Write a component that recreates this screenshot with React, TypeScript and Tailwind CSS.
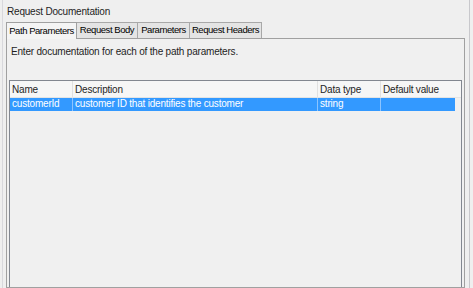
import * as React from 'react';

const tabs = [
  { label: 'Path Parameters', width: 'w-[71px]' },
  { label: 'Request Body', width: 'w-[61px]' },
  { label: 'Parameters', width: 'w-[52px]' },
  { label: 'Request Headers', width: 'w-[72px]' },
];

const columns = [
  { label: 'Name', width: 'w-[63px]' },
  { label: 'Description', width: 'w-[245px]' },
  { label: 'Data type', width: 'w-[63px]' },
  { label: 'Default value', width: 'flex-1' },
];

const row = ['customerId', 'customer ID that identifies the customer', 'string', ''];

export default function App() {
  return (
    <div
      className="w-[473px] h-[288px] bg-[#efefef] text-[10px] tracking-[-0.2px] text-[#1e1e1e] overflow-hidden flex"
      style={{ fontFamily: '"Liberation Sans", Arial, sans-serif' }}
    >
      <div className="w-[3px] border-r border-[#d8d8dc] h-full" />
      <div className="flex-1 flex flex-col pl-[3px] pr-[4px]">
        <div className="h-[21px] pt-[6px] pl-[1px] leading-[12px]">Request Documentation</div>

        {/* Tabs */}
        <div className="flex items-end h-[17px]">
          {tabs.map((t, i) => {
            const active = i === 0;
            return (
              <div
                key={t.label}
                className={
                  active
                    ? `${t.width} h-[17px] border border-b-0 border-[#a0a0a0] bg-[#f4f4f4] leading-[15px] text-center text-[9.5px] tracking-[-0.45px] text-black relative z-10 -mb-px whitespace-nowrap`
                    : `${t.width} h-[16px] border border-l-0 border-b-0 border-[#a8a8a8] bg-[#e4e4e4] leading-[14px] text-center text-[9.5px] tracking-[-0.45px] text-black whitespace-nowrap`
                }
              >
                {t.label}
              </div>
            );
          })}
        </div>

        {/* Panel */}
        <div className="flex-1 border border-[#a0a0a0] bg-[#f0f0f0] flex flex-col px-[2px]">
          <div className="pt-[7px] pl-[2px] leading-[12px] h-[41px]">
            Enter documentation for each of the path parameters.
          </div>
          <div className="flex-1 border border-[#828790] border-b-0 bg-[#f0f0f0] flex flex-col">
            <div className="flex h-[17px] border-b border-[#e4e4e4] bg-[#f6f6f6]">
              {columns.map((c, i) => (
                <div
                  key={c.label}
                  className={`${c.width} h-full pl-[2px] leading-[17px] ${
                    i < columns.length - 1 ? 'border-r border-[#e0e0e0]' : ''
                  }`}
                >
                  {c.label}
                </div>
              ))}
            </div>
            <div className="flex h-[13px] bg-[#3399ff] text-white mr-[6px]">
              {columns.map((c, i) => (
                <div
                  key={c.label}
                  className={`${c.width} h-full pl-[2px] leading-[12px] whitespace-nowrap overflow-hidden ${
                    i < columns.length - 1 ? 'border-r border-[#8cc4ff]' : ''
                  }`}
                >
                  {row[i]}
                </div>
              ))}
            </div>
          </div>
        </div>
      </div>
      <div className="w-[4px] border-l border-[#c8c8cc] h-full" />
    </div>
  );
}
